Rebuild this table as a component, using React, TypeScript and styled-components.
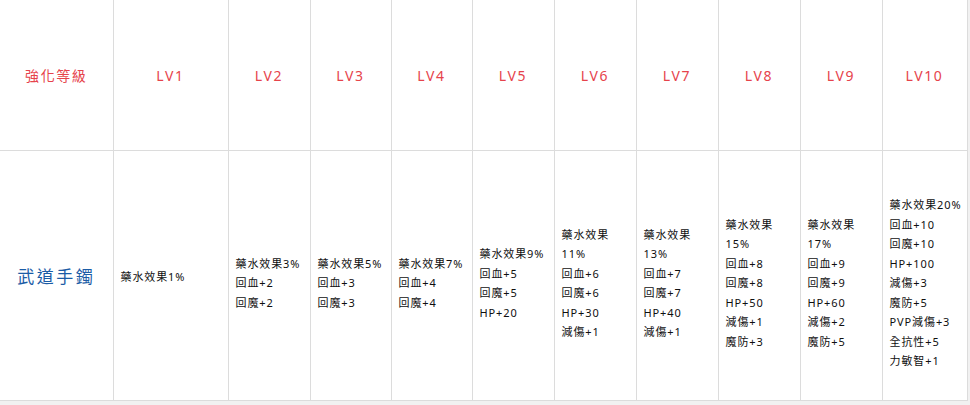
import React from "react";
import styled, { createGlobalStyle } from "styled-components";

const Global = createGlobalStyle`
  html, body { margin: 0; padding: 0; background: #ffffff; }
  body { font-family: "Noto Sans", "Noto Sans CJK TC", sans-serif; }
`;

const Page = styled.div`
  width: 970px;
  height: 405px;
  background: #f1f1f1;
  overflow: hidden;
`;

const Table = styled.table`
  width: 967px;
  table-layout: fixed;
  border-collapse: collapse;
  background: #ffffff;
`;

const HeadCell = styled.td`
  height: 150px;
  padding: 0;
  text-align: center;
  vertical-align: middle;
  color: #e6434b;
  font-size: 14px;
  letter-spacing: 1.6px;
  border-right: 1px solid #dcdcdc;
  border-bottom: 1px solid #dcdcdc;
`;

const NameCell = styled.td`
  height: 249px;
  padding: 0;
  text-align: center;
  vertical-align: middle;
  color: #1b5ca6;
  font-size: 17px;
  letter-spacing: 2.5px;
  border-right: 1px solid #dcdcdc;
  border-bottom: 1px solid #dcdcdc;
`;

const StatCell = styled.td<{ $shift: number }>`
  padding: ${(p) => p.$shift}px 3px 0 7px;
  vertical-align: middle;
  color: #0f0f0f;
  font-size: 11px;
  line-height: 19.5px;
  letter-spacing: 0.9px;
  border-right: 1px solid #dcdcdc;
  border-bottom: 1px solid #dcdcdc;
`;

const Line = styled.div`
  white-space: nowrap;
`;

const widths = [113, 115, 82, 81, 81, 82, 82, 82, 82, 82, 85];

const stats: string[][] = [
  ["藥水效果1%"],
  ["藥水效果3%", "回血+2", "回魔+2"],
  ["藥水效果5%", "回血+3", "回魔+3"],
  ["藥水效果7%", "回血+4", "回魔+4"],
  ["藥水效果9%", "回血+5", "回魔+5", "HP+20"],
  ["藥水效果", "11%", "回血+6", "回魔+6", "HP+30", "減傷+1"],
  ["藥水效果", "13%", "回血+7", "回魔+7", "HP+40", "減傷+1"],
  ["藥水效果", "15%", "回血+8", "回魔+8", "HP+50", "減傷+1", "魔防+3"],
  ["藥水效果", "17%", "回血+9", "回魔+9", "HP+60", "減傷+2", "魔防+5"],
  ["藥水效果20%", "回血+10", "回魔+10", "HP+100", "減傷+3", "魔防+5", "PVP減傷+3", "全抗性+5", "力敏智+1"],
];

export default function App() {
  return (
    <Page>
      <Global />
      <Table>
        <colgroup>
          {widths.map((w, i) => (
            <col key={i} style={{ width: w }} />
          ))}
        </colgroup>
        <tbody>
          <tr>
            <HeadCell>強化等級</HeadCell>
            {Array.from({ length: 10 }, (_, i) => (
              <HeadCell key={i}>LV{i + 1}</HeadCell>
            ))}
          </tr>
          <tr>
            <NameCell>武道手鐲</NameCell>
            {stats.map((lines, i) => (
              <StatCell key={i} $shift={lines.length > 1 ? 15 : 3}>
                {lines.map((l, j) => (
                  <Line key={j}>{l}</Line>
                ))}
              </StatCell>
            ))}
          </tr>
        </tbody>
      </Table>
    </Page>
  );
}
